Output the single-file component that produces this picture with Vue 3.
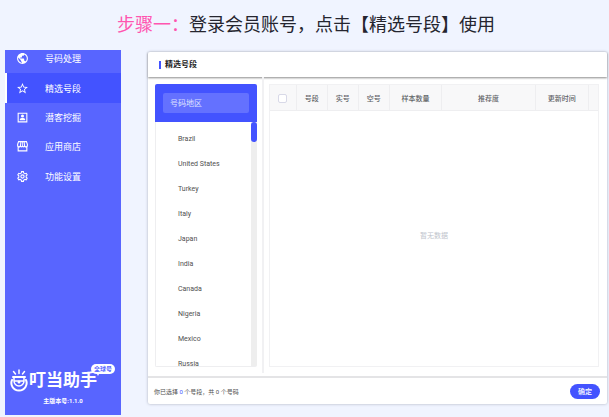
<script setup>
import { ref } from 'vue'

const menu = ['号码处理', '精选号段', '潜客挖掘', '应用商店', '功能设置']
const active = ref(1)
const regions = ['Brazil', 'United States', 'Turkey', 'Italy', 'Japan', 'India', 'Canada', 'Nigeria', 'Mexico', 'Russia']
const columns = ['号段', '实号', '空号', '样本数量', '推荐度', '更新时间']
const keyword = ref('')
const selectAll = ref(false)
const picked = ref(0)
const numbers = ref(0)
</script>

<template>
  <div class="page">
    <h1 class="title"><span>步骤一：</span>登录会员账号，点击【精选号段】使用</h1>
    <div class="layout">
      <aside class="sidebar">
        <nav class="menu">
          <a v-for="(name, i) in menu" :key="name" href="#" class="item" :class="{ active: i === active }" @click.prevent="active = i">
            <svg class="icon" viewBox="0 0 24 24" aria-hidden="true">
              <path v-if="i === 0" d="M12 2C6.480 2 2 6.480 2 12s4.480 10 10 10 10-4.480 10-10S17.520 2 12 2zm-1 17.930c-3.950-.49-7-3.850-7-7.930 0-.62.080-1.210.21-1.790L9 15v1c0 1.100.9 2 2 2v1.930zm6.900-2.540c-.26-.81-1-1.390-1.900-1.390h-1v-3c0-.55-.45-1-1-1H8v-2h2c.55 0 1-.45 1-1V7h2c1.100 0 2-.9 2-2v-.41c2.930 1.190 5 4.060 5 7.410 0 2.080-.8 3.970-2.100 5.390z" />
              <path v-else-if="i === 1" d="M22 9.240l-7.190-.62L12 2 9.190 8.630 2 9.240l5.460 4.730L5.820 21 12 17.270 18.180 21l-1.630-7.030L22 9.240zM12 15.400l-3.760 2.270 1-4.280-3.320-2.880 4.380-.38L12 6.100l1.710 4.040 4.380.38-3.320 2.880 1 4.280L12 15.400z" />
              <path v-else-if="i === 2" d="M3 3h18v18H3zm2 2v14h14V5zm7 1.500a2.800 2.800 0 1 1 0 5.600 2.800 2.800 0 0 1 0-5.600zM7 17v-1.200c0-1.800 3.300-2.700 5-2.700s5 .9 5 2.700V17z" fill-rule="evenodd" />
              <path v-else-if="i === 3" d="M4 2h16l2 6v2.500c0 1-.4 1.900-1 2.500v8H3v-8c-.6-.6-1-1.500-1-2.500V8zm1 12v5h14v-5c-1.300.1-2.400-.4-3.300-1.200-1 .9-2.700 1.300-3.700.2-1.200 1.100-2.700.7-3.700-.2-.9.8-2 1.300-3.300 1.200zm.4-10L4 8.500V10c0 2 3 2 3.300 0l.7-6zm4.600 0l-.7 6c0 2 2 2 2 0V4zm2.700 0v6c0 2 2 2 2 0L14 4zm3.300 0l.7 6c.3 2 3.300 2 3.300 0V8.500L18.600 4z" fill-rule="evenodd" />
              <path v-else d="M9.500 2h5l.6 2.900 1.500.9 2.800-.9 2.500 4.300-2.200 2v1.700l2.200 2-2.500 4.300-2.800-.9-1.500.9-.6 2.900h-5l-.6-2.900-1.500-.9-2.800.9-2.500-4.300 2.200-2v-1.700l-2.200-2 2.500-4.300 2.800.9 1.500-.9zm1.600 2l-.5 2.200-3 1.800-2.200-.7-.9 1.500 1.700 1.500v3.500l-1.700 1.500.9 1.500 2.200-.7 3 1.800.5 2.100h1.800l.5-2.100 3-1.800 2.200.7.9-1.500-1.700-1.500v-3.500l1.700-1.500-.9-1.500-2.200.7-3-1.800-.5-2.200zM12 8a4 4 0 1 1 0 8 4 4 0 0 1 0-8zm0 2a2 2 0 1 0 0 4 2 2 0 0 0 0-4z" fill-rule="evenodd" />
            </svg>
            <span>{{ name }}</span>
          </a>
        </nav>
        <div class="brand">
          <div class="logo">
            <svg class="mark" viewBox="0 0 36 50" aria-hidden="true">
              <g fill="none" stroke="#fff" stroke-width="3" stroke-linecap="round">
                <path d="M7 7l4 5M18 4v7M29 7l-4 5" />
                <path d="M6 18h24" stroke-width="4" />
                <path d="M4 24c-4 9 2 21 14 21s18-12 14-21" stroke-width="4" />
                <path d="M8 20v6a10 10 0 0 0 20 0v-6M9 26h18" />
              </g>
              <circle cx="18" cy="28" r="3" fill="#fff" />
            </svg>
            <strong>叮当助手</strong>
            <span class="badge">全球号</span>
          </div>
          <p class="version">主版本号:1.1.0</p>
        </div>
      </aside>

      <main class="panel">
        <header class="head"><h2>精选号段</h2></header>
        <div class="body">
          <section class="left">
            <div class="picker">
              <div class="search"><input v-model="keyword" type="text" placeholder="号码地区" aria-label="号码地区" /></div>
              <div class="scroll">
                <ul class="regions">
                  <li v-for="r in regions" :key="r">{{ r }}</li>
                </ul>
                <div class="track"><div class="thumb"></div></div>
              </div>
            </div>
          </section>
          <section class="right">
            <div class="grid">
              <table>
                <colgroup>
                  <col class="c-check" /><col class="c-short" /><col class="c-short" /><col class="c-short" />
                  <col class="c-mid" /><col /><col class="c-mid" /><col class="c-end" />
                </colgroup>
                <thead>
                  <tr>
                    <th><input v-model="selectAll" type="checkbox" aria-label="全选" /></th>
                    <th v-for="c in columns" :key="c">{{ c }}</th>
                    <th></th>
                  </tr>
                </thead>
              </table>
              <p class="empty">暂无数据</p>
            </div>
          </section>
        </div>
        <footer class="foot">
          <p>你已选择 <b>{{ picked }}</b> 个号段，共 {{ numbers }} 个号码</p>
          <button type="button">确定</button>
        </footer>
      </main>
    </div>
  </div>
</template>

<style>
body {
  background: #f0f4ff;
}
</style>

<style scoped>
.page {
  box-sizing: border-box;
  min-height: 100vh;
  display: flex;
  flex-direction: column;
  padding: 0 2px 2px 5px;
  background: #f0f4ff;
  font-family: Roboto, "Noto Sans CJK SC", sans-serif;
  font-size: 8px;
  color: #505050;
}
h1, h2, p, ul {
  margin: 0;
  padding: 0;
}
.title {
  height: 50px;
  line-height: 47px;
  text-align: center;
  font-family: "Noto Sans CJK SC", sans-serif;
  font-size: 18px;
  font-weight: 400;
  color: #25252f;
}
.title span {
  color: #ff55b0;
}
.layout {
  flex: 1;
  display: grid;
  grid-template-columns: 116px 1fr;
  column-gap: 27px;
}
.sidebar {
  display: flex;
  flex-direction: column;
  justify-content: space-between;
  overflow: hidden;
  background: #5865ff;
}
.menu {
  display: flex;
  flex-direction: column;
  height: 147px;
  margin-top: -6px;
}
.item {
  flex: 1;
  display: flex;
  align-items: center;
  gap: 16px;
  padding-left: 9px;
  border-left: 2px solid transparent;
  font-size: 9px;
  color: #fff;
  text-decoration: none;
}
.item.active {
  border-left-color: #fff;
  background: #4353ff;
}
.icon {
  width: 13px;
  height: 13px;
  fill: #fff;
}
.brand {
  padding: 0 5px 10px;
  color: #fff;
}
.logo {
  position: relative;
  display: flex;
  align-items: center;
  gap: 1px;
}
.mark {
  width: 18px;
  height: 25px;
}
.logo strong {
  font-size: 17px;
  line-height: 28px;
  font-weight: 700;
}
.badge {
  position: absolute;
  left: 81px;
  top: -2px;
  padding: 0 3px;
  border-radius: 5px;
  background: #fff;
  color: #5865ff;
  font-size: 6px;
  line-height: 10px;
  font-weight: 700;
}
.badge::after {
  content: "";
  position: absolute;
  left: 5px;
  top: 8px;
  border: 2px solid transparent;
  border-top: 4px solid #fff;
}
.version {
  margin-top: 3px;
  text-align: center;
  font-size: 6px;
  line-height: 8px;
  font-weight: 700;
}
.panel {
  display: flex;
  flex-direction: column;
  margin: 2px 0 11px;
  background: #fff;
  border-radius: 2px;
  box-shadow: 0 0 3px #a9adbc;
}
.head {
  display: flex;
  align-items: center;
  height: 25px;
  padding-left: 11px;
  box-shadow: 0 1px 2px #8c8c8c;
}
.head h2 {
  padding-left: 4px;
  border-left: 2px solid #4353ff;
  font-size: 8px;
  line-height: 8px;
  font-weight: 700;
  color: #222;
}
.body {
  flex: 1;
  display: flex;
  padding-bottom: 3px;
}
.left {
  display: flex;
  width: 116px;
  box-sizing: border-box;
  padding: 7px 5px 6px 7px;
  border-right: 2px solid #f1f1f3;
}
.picker {
  flex: 1;
  display: flex;
  flex-direction: column;
  border-radius: 2px;
  overflow: hidden;
}
.search {
  display: flex;
  padding: 9px 8px;
  background: #4353ff;
}
.search input {
  flex: 1;
  min-width: 0;
  height: 20px;
  box-sizing: border-box;
  padding: 0 7px;
  border: 0;
  border-radius: 2px;
  background: #6471ff;
  color: #fff;
  font: inherit;
}
.search input::placeholder {
  color: #dfe2ff;
}
.scroll {
  flex: 1;
  display: flex;
  border: 1px solid #eeeef0;
  border-width: 0 0 1px 1px;
}
.regions {
  flex: 1;
  height: 0;
  min-height: 100%;
  padding: 5px 0 0 22px;
  box-sizing: border-box;
  overflow: hidden;
  list-style: none;
  font-size: 7px;
  line-height: 25px;
}
.track {
  width: 6px;
  background: #eee;
}
.thumb {
  height: 20px;
  border-radius: 3px;
  background: #4353ff;
}
.right {
  flex: 1;
  display: flex;
  padding: 7px 8px 6px 5px;
}
.grid {
  flex: 1;
  display: flex;
  flex-direction: column;
  border: 1px solid #f1f1f3;
}
table {
  width: 100%;
  table-layout: fixed;
  border-collapse: collapse;
}
.c-check {
  width: 8%;
}
.c-short {
  width: 31px;
}
.c-mid {
  width: 16%;
}
.c-end {
  width: 10px;
}
th {
  height: 25px;
  padding: 0;
  border: 1px solid #eeeef0;
  border-width: 0 1px 1px 0;
  background: #f8f8f9;
  font-size: 7px;
  font-weight: 500;
  color: #606266;
}
th:last-child {
  border-right: 0;
}
th input {
  appearance: none;
  display: block;
  width: 9px;
  height: 9px;
  margin: 2px auto 0;
  border: 1px solid #d8d9e8;
  border-radius: 2px;
  background: #fff;
}
th input:checked {
  background: #4353ff;
}
.empty {
  flex: 1;
  display: flex;
  align-items: center;
  justify-content: center;
  padding-bottom: 8px;
  font-size: 7px;
  color: #c0c4cc;
}
.foot {
  display: flex;
  align-items: center;
  justify-content: space-between;
  height: 26px;
  padding: 0 7px 0 6px;
  border-top: 2px solid #e4e4e6;
}
.foot p {
  font-size: 6px;
}
.foot b {
  font-weight: 400;
  color: #4353ff;
}
.foot button {
  width: 30px;
  height: 15px;
  padding: 0;
  border: 0;
  border-radius: 8px;
  background: #4353ff;
  color: #fff;
  font: inherit;
  font-size: 7px;
  font-weight: 500;
}
</style>
